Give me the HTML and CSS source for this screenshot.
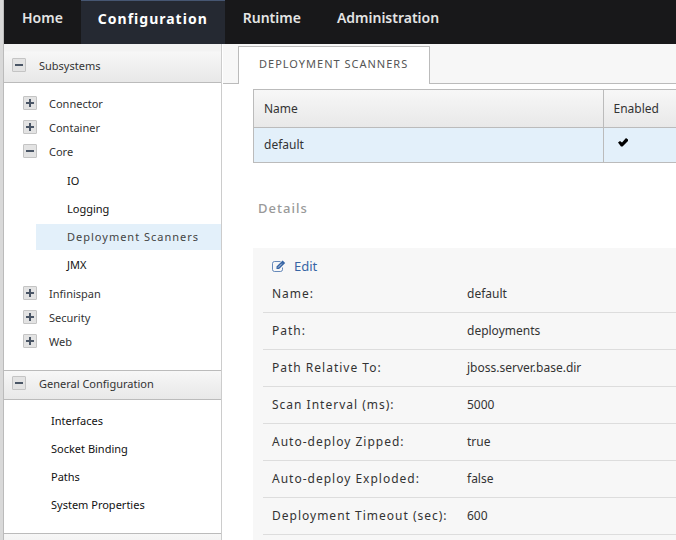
FILE: index.html
```html
<!DOCTYPE html>
<html lang="en">
<head>
<meta charset="utf-8">
<title>Deployment Scanners</title>
<link rel="stylesheet" href="styles.css">
</head>
<body>
<div class="app">
  <nav class="topnav" aria-label="Main">
    <a href="#home">Home</a>
    <a href="#configuration" class="active" aria-current="page">Configuration</a>
    <a href="#runtime">Runtime</a>
    <a href="#administration">Administration</a>
  </nav>
  <div class="columns">
    <aside class="sidebar">
      <section>
        <h2 class="group first"><button class="toggle" aria-label="Collapse Subsystems"><svg viewBox="0 0 14 14"><path d="M3 6h8v2H3z"/></svg></button>Subsystems</h2>
        <ul class="tree">
          <li><div class="node"><button class="toggle" aria-label="Expand Connector"><svg viewBox="0 0 14 14"><path d="M3 6h3V3h2v3h3v2H8v3H6V8H3z"/></svg></button>Connector</div></li>
          <li><div class="node"><button class="toggle" aria-label="Expand Container"><svg viewBox="0 0 14 14"><path d="M3 6h3V3h2v3h3v2H8v3H6V8H3z"/></svg></button>Container</div></li>
          <li>
            <div class="node"><button class="toggle" aria-label="Collapse Core"><svg viewBox="0 0 14 14"><path d="M3 6h8v2H3z"/></svg></button>Core</div>
            <ul class="leaves">
              <li><a href="#io">IO</a></li>
              <li><a href="#logging">Logging</a></li>
              <li><a href="#scanners" class="selected">Deployment Scanners</a></li>
              <li><a href="#jmx">JMX</a></li>
            </ul>
          </li>
          <li><div class="node"><button class="toggle" aria-label="Expand Infinispan"><svg viewBox="0 0 14 14"><path d="M3 6h3V3h2v3h3v2H8v3H6V8H3z"/></svg></button>Infinispan</div></li>
          <li><div class="node"><button class="toggle" aria-label="Expand Security"><svg viewBox="0 0 14 14"><path d="M3 6h3V3h2v3h3v2H8v3H6V8H3z"/></svg></button>Security</div></li>
          <li><div class="node"><button class="toggle" aria-label="Expand Web"><svg viewBox="0 0 14 14"><path d="M3 6h3V3h2v3h3v2H8v3H6V8H3z"/></svg></button>Web</div></li>
        </ul>
      </section>
      <section>
        <h2 class="group"><button class="toggle" aria-label="Collapse General Configuration"><svg viewBox="0 0 14 14"><path d="M3 6h8v2H3z"/></svg></button>General Configuration</h2>
        <ul class="general">
          <li><a href="#interfaces">Interfaces</a></li>
          <li><a href="#sockets">Socket Binding</a></li>
          <li><a href="#paths">Paths</a></li>
          <li><a href="#properties">System Properties</a></li>
        </ul>
      </section>
      <div class="group"></div>
    </aside>
    <main class="content">
      <div class="tabs"><a href="#scanners" class="tab">DEPLOYMENT SCANNERS</a></div>
      <div class="page">
        <table class="grid">
          <thead><tr><th>Name</th><th class="enabled">Enabled</th></tr></thead>
          <tbody><tr><td>default</td><td class="enabled"><svg class="check" viewBox="0 0 10 9" role="img" aria-label="Yes"><path d="M0 4.5 2 3l2 1.5L8 0l2 1.5V3L4.500 8.500H3z"/></svg></td></tr></tbody>
        </table>
        <h3 class="details">Details</h3>
        <section class="panel">
          <button class="edit"><svg viewBox="0 0 14 12"><path d="M10.500 7.500v2a2 2 0 0 1-2 2h-6a2 2 0 0 1-2-2v-6a2 2 0 0 1 2-2h6" fill="none" stroke="currentColor" stroke-opacity=".75"/><path d="M4.500 9V6.500L10.600.6l2.600 2.500L7.100 9z" fill="currentColor"/><path d="M6 7.600 9.800 3.700" stroke="#f7f7f7" stroke-width=".7"/></svg>Edit</button>
          <dl class="fields">
            <div><dt>Name:</dt><dd>default</dd></div>
            <div><dt>Path:</dt><dd>deployments</dd></div>
            <div><dt>Path Relative To:</dt><dd>jboss.server.base.dir</dd></div>
            <div><dt>Scan Interval (ms):</dt><dd>5000</dd></div>
            <div><dt>Auto-deploy Zipped:</dt><dd>true</dd></div>
            <div><dt>Auto-deploy Exploded:</dt><dd>false</dd></div>
            <div><dt>Deployment Timeout (sec):</dt><dd>600</dd></div>
          </dl>
        </section>
      </div>
    </main>
  </div>
</div>
</body>
</html>
```
FILE: styles.css
```css
* { box-sizing: border-box; }
body {
  margin: 0;
  background: #d9d9d9;
  color: #333;
  font: 12px/18px "Noto Sans", "Open Sans", sans-serif;
}
a { color: inherit; text-decoration: none; }
button { margin: 0; padding: 0; font: inherit; cursor: pointer; }
ul, dl, dd { margin: 0; padding: 0; list-style: none; }

.app {
  display: flex;
  flex-direction: column;
  height: 100vh;
  margin-left: 3px;
  overflow: hidden;
  border-left: 1px solid #bbb;
  background: #fff;
}

.topnav {
  display: flex;
  flex: 0 0 44px;
  background: #18181a;
  color: #e4e4e4;
  font-size: 14px;
  font-weight: 600;
}
.topnav a { padding: 8px 18px; border-top: 1px solid transparent; }
.topnav .active {
  padding: 9px 17px;
  border-top-color: #465672;
  background: #252932;
  color: #fff;
  font-weight: 700;
  letter-spacing: 1px;
}

.columns { display: flex; flex: 1; min-height: 0; }
.sidebar {
  flex: 0 0 218px;
  overflow: hidden;
  border-right: 1px solid #ccc;
  font-size: 11px;
}
.group {
  display: flex;
  align-items: center;
  gap: 13px;
  height: 30px;
  margin: 0;
  padding: 0 8px 2px;
  border-top: 1px solid #bbb;
  border-bottom: 1px solid #bbb;
  background: linear-gradient(#f7f7f7, #e8e8e8);
  font-size: 11px;
  font-weight: 400;
}
.first { height: 39px; padding-top: 7px; border-top: 0; background: linear-gradient(#f3f3f3 7px, #f7f7f7 8px, #e8e8e8); }
.toggle {
  width: 14px;
  height: 14px;
  margin-bottom: 2px;
  border: 1px solid #c4c4c4;
  border-radius: 1px;
  background: #e3e3e3;
}
.toggle svg { display: block; width: 14px; height: 14px; margin: -1px; fill: #4a5666; }

.tree { padding: 9px 0 16px; }
.node { display: flex; align-items: center; gap: 12px; height: 24px; padding-left: 19px; }
.leaves { display: grid; gap: 2px; padding: 4px 0 4px 32px; color: #111; }
.leaves a { display: block; padding: 4px 0 4px 31px; }
.leaves .selected { background: #e3f0fa; color: #444; letter-spacing: 1px; }
.general { display: grid; gap: 10px; padding: 12px 0 19px 47px; color: #111; }
.general a { display: block; }

.content { flex: 1; min-width: 0; overflow: hidden; }
.tabs {
  display: flex;
  height: 40px;
  margin-left: 1px;
  padding: 2px 0 0 15px;
  border-bottom: 1px solid #bbb;
  background: #f7f7f7;
}
.tab {
  margin-bottom: -1px;
  padding: 8px 21px 9px 20px;
  border: 1px solid #bbb;
  border-bottom: 0;
  background: #fff;
  color: #555;
  font-size: 11px;
  letter-spacing: 1px;
}
.page { padding: 5px 0 0 31px; }

.grid { width: 100%; border-collapse: collapse; }
.grid th, .grid td {
  padding: 0 10px;
  border: 1px solid #bbb;
  border-right: 0;
  text-align: left;
  font-weight: 400;
}
.grid th { height: 38px; }
.grid td { height: 35px; background: #e3f0fa; }
.grid thead { background: linear-gradient(#f7f7f7, #e8e8e8); }
.grid .enabled { width: 73px; padding-right: 0; }
.check { display: block; width: 10px; height: 9px; margin: -5px 0 0 4px; }

.details {
  margin: 36px 5px 31px;
  color: #999;
  font-size: 13px;
  font-weight: 500;
  letter-spacing: 1px;
}
.panel { height: 320px; padding: 9px 0 0 10px; background: #f7f7f7; }
.edit {
  display: flex;
  align-items: center;
  gap: 8px;
  margin-bottom: 1px;
  margin-left: 9px;
  border: 0;
  background: none;
  color: #3765a5;
  font-size: 13px;
}
.edit svg { width: 14px; height: 12px; }
.fields div {
  display: flex;
  height: 37px;
  padding: 9px;
  border-bottom: 1px solid #ddd;
}
.fields dt { flex: 0 0 195px; letter-spacing: 1px; }
```
